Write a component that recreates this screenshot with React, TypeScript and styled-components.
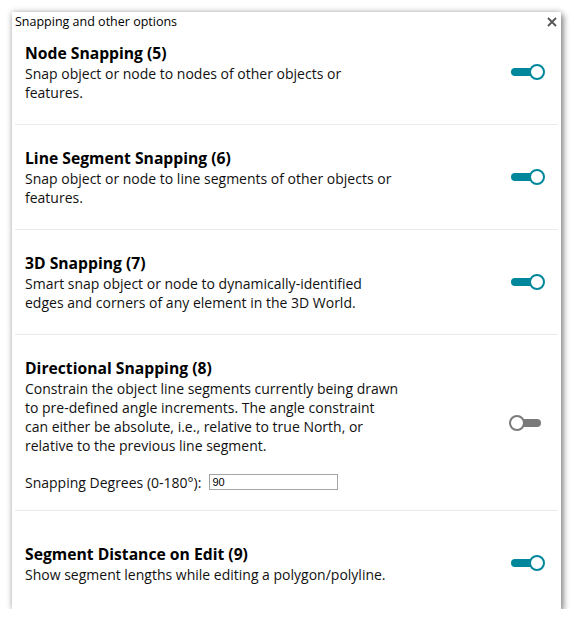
import React, { useState } from "react";
import styled, { createGlobalStyle } from "styled-components";

const Global = createGlobalStyle`
  html, body { margin: 0; padding: 0; background: #ffffff; }
  body { font-family: "Open Sans", "Noto Sans", sans-serif; }
`;

const Page = styled.div`
  padding: 12px 0 0 12px;
`;

const Panel = styled.div`
  width: 549px;
  height: 597px;
  background: #ffffff;
  box-shadow: 0 0 6px rgba(0, 0, 0, 0.28), 3px 3px 6px rgba(0, 0, 0, 0.35);
  display: flex;
  flex-direction: column;
  box-sizing: border-box;
`;

const Header = styled.div`
  display: flex;
  align-items: center;
  justify-content: space-between;
  height: 19px;
  padding: 0 3px 0 3px;
  flex-shrink: 0;
`;

const HeaderTitle = styled.div`
  font-size: 12.5px;
  color: #000;
  line-height: 19px;
`;

const CloseButton = styled.button`
  border: none;
  background: none;
  padding: 0;
  width: 12px;
  height: 12px;
  display: flex;
  align-items: center;
  justify-content: center;
  cursor: pointer;
`;

const List = styled.div`
  flex: 1;
  display: flex;
  flex-direction: column;
  padding: 0 3px;
`;

const Row = styled.div<{ $grow?: boolean; $last?: boolean; $first?: boolean }>`
  display: flex;
  align-items: center;
  justify-content: space-between;
  padding: ${(p) => (p.$first ? "11px" : p.$last ? "28px" : "22px")} 12px
    ${(p) => (p.$last ? "22px" : "22px")} 10px;
  border-bottom: ${(p) => (p.$last ? "none" : "1px solid #ebebeb")};
  flex: ${(p) => (p.$grow ? 1 : "none")};
`;

const Text = styled.div`
  display: flex;
  flex-direction: column;
`;

const Title = styled.div`
  font-size: 15.7px;
  font-weight: 700;
  color: #000;
  line-height: 22px;
`;

const DescLine = styled.div`
  font-size: 14px;
  color: #111;
  line-height: 19px;
  white-space: nowrap;
`;

const Field = styled.label`
  display: flex;
  align-items: center;
  gap: 8px;
  height: 16px;
  margin: 19px 0 -2px;
  font-size: 14px;
  color: #111;
`;

const Input = styled.input`
  width: 129px;
  height: 16px;
  box-sizing: border-box;
  border: 1px solid #a4a4a4;
  font-family: "Liberation Sans", Arial, sans-serif;
  font-size: 11px;
  padding: 0 2px;
  outline: none;
`;

const Toggle = styled.button<{ $on: boolean }>`
  position: relative;
  width: 38px;
  height: 18px;
  border: none;
  background: none;
  padding: 0;
  cursor: pointer;
  flex-shrink: 0;
  &::before {
    content: "";
    position: absolute;
    top: 5px;
    left: 3px;
    width: 30px;
    height: 8px;
    border-radius: 4px;
    background: ${(p) => (p.$on ? "#00879c" : "#7a7a7a")};
  }
  &::after {
    content: "";
    position: absolute;
    top: 1px;
    left: ${(p) => (p.$on ? "21px" : "1px")};
    width: 12px;
    height: 12px;
    border-radius: 50%;
    background: #fff;
    border: 2px solid ${(p) => (p.$on ? "#00879c" : "#7a7a7a")};
  }
`;

type Opt = { title: string; lines: string[]; on: boolean; field?: boolean };

const options: Opt[] = [
  {
    title: "Node Snapping (5)",
    lines: ["Snap object or node to nodes of other objects or", "features."],
    on: true,
  },
  {
    title: "Line Segment Snapping (6)",
    lines: ["Snap object or node to line segments of other objects or", "features."],
    on: true,
  },
  {
    title: "3D Snapping (7)",
    lines: [
      "Smart snap object or node to dynamically-identified",
      "edges and corners of any element in the 3D World.",
    ],
    on: true,
  },
  {
    title: "Directional Snapping (8)",
    lines: [
      "Constrain the object line segments currently being drawn",
      "to pre-defined angle increments. The angle constraint",
      "can either be absolute, i.e., relative to true North, or",
      "relative to the previous line segment.",
    ],
    on: false,
    field: true,
  },
  {
    title: "Segment Distance on Edit (9)",
    lines: ["Show segment lengths while editing a polygon/polyline."],
    on: true,
  },
];

export default function App() {
  const [state, setState] = useState(options.map((o) => o.on));
  const [deg, setDeg] = useState("90");
  const last = options.length - 1;
  return (
    <Page>
      <Global />
      <Panel>
        <Header>
          <HeaderTitle>Snapping and other options</HeaderTitle>
          <CloseButton aria-label="Close">
            <svg width="10" height="10" viewBox="0 0 10 10">
              <path d="M1 1L9 9M9 1L1 9" stroke="#555" strokeWidth="1.8" />
            </svg>
          </CloseButton>
        </Header>
        <List>
          {options.map((o, i) => (
            <Row key={o.title} $first={i === 0} $grow={i === last} $last={i === last}>
              <Text>
                <Title>{o.title}</Title>
                {o.lines.map((l) => (
                  <DescLine key={l}>{l}</DescLine>
                ))}
                {o.field && (
                  <Field>
                    Snapping Degrees (0-180°):
                    <Input value={deg} onChange={(e) => setDeg(e.target.value)} />
                  </Field>
                )}
              </Text>
              <Toggle
                $on={state[i]}
                aria-label={o.title}
                onClick={() => setState((s) => s.map((v, j) => (j === i ? !v : v)))}
              />
            </Row>
          ))}
        </List>
      </Panel>
    </Page>
  );
}
